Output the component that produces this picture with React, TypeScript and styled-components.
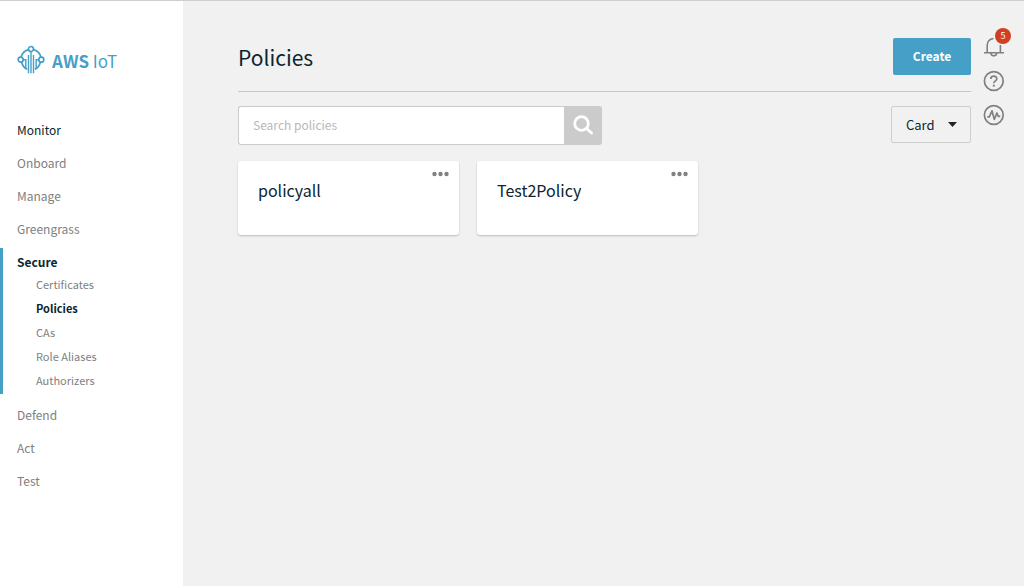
import React from "react";
import styled, { createGlobalStyle, css } from "styled-components";

const blue = "#469fc6";
const ink = "#0c2630";
const grey = "#808080";

const GlobalStyle = createGlobalStyle`
  *, *::before, *::after { box-sizing: border-box; }
  body {
    margin: 0;
    background: #f1f1f1;
    color: ${ink};
    font-family: "Noto Sans CJK SC", "Noto Sans", sans-serif;
    font-size: 13px;
  }
  button, input, select { font: inherit; color: inherit; }
  ul { list-style: none; margin: 0; padding: 0; }
  a { color: inherit; text-decoration: none; }
`;

const Page = styled.div`
  display: flex;
  min-height: 100vh;
  border-top: 1px solid #cfcfcf;
`;

const Sidebar = styled.aside`
  flex: 0 0 183px;
  background: #fff;
`;

const Brand = styled.a`
  display: flex;
  align-items: flex-start;
  gap: 7px;
  padding: 44px 0 0 17px;
  color: ${blue};
  font-size: 17px;
  line-height: 32px;
`;

const NavList = styled.ul`
  display: flex;
  flex-direction: column;
  gap: 5px;
  padding-top: 39px;
`;

const NavItem = styled.li<{ $open?: boolean }>`
  padding: 3px 0 3px 17px;
  ${(p) =>
    p.$open &&
    css`
      padding: 3px 0 2px 14px;
      margin-bottom: 2px;
      border-left: 3px solid ${blue};
    `}
`;

const NavLink = styled.a<{ $dark?: boolean; $bold?: boolean }>`
  display: block;
  line-height: 22px;
  font-size: 12px;
  color: ${(p) => (p.$dark ? ink : grey)};
  font-weight: ${(p) => (p.$bold ? 700 : 400)};
`;

const SubList = styled.ul`
  margin-top: -1px;
`;

const SubLink = styled(NavLink)`
  padding-left: 19px;
  font-size: 11px;
  line-height: 24px;
`;

const Main = styled.main`
  flex: 1;
  min-width: 0;
  padding: 37px 12px 0 55px;
`;

const Header = styled.header`
  display: flex;
  justify-content: space-between;
  align-items: flex-start;
  height: 54px;
  border-bottom: 1px solid #c8c8c8;
`;

const Title = styled.h1`
  margin: 0;
  font-size: 21px;
  font-weight: 400;
  line-height: 38px;
`;

const CreateButton = styled.button`
  width: 78px;
  height: 37px;
  padding: 0 0 2px;
  border: 0;
  border-radius: 2px;
  background: ${blue};
  color: #fff;
  font-weight: 700;
  font-size: 12px;
`;

const Toolbar = styled.div`
  display: flex;
  justify-content: space-between;
  align-items: flex-start;
  padding: 14px 0 16px;
`;

const SearchForm = styled.form`
  display: flex;
  width: 364px;
  height: 39px;
`;

const SearchInput = styled.input`
  flex: 1;
  min-width: 0;
  padding: 0 14px 2px;
  border: 1px solid #cbcbcb;
  border-right: 0;
  border-radius: 3px 0 0 3px;
  background: #fff;
  font-size: 12px;
  &::placeholder { color: #b8b8b8; opacity: 1; }
`;

const SearchButton = styled.button`
  display: grid;
  place-items: center;
  width: 38px;
  padding: 0 0 2px;
  border: 0;
  border-radius: 0 3px 3px 0;
  background: #cbcbcb;
`;

const SelectWrap = styled.div`
  display: grid;
  align-items: center;
  width: 80px;
  height: 37px;
  > * { grid-area: 1 / 1; }
  > svg { justify-self: end; margin-right: 14px; pointer-events: none; }
`;

const ViewSelect = styled.select`
  appearance: none;
  width: 100%;
  height: 100%;
  padding: 0 14px;
  border: 1px solid #cecece;
  border-radius: 2px;
  background: transparent;
`;

const Cards = styled.ul`
  display: flex;
  flex-wrap: wrap;
  gap: 18px;
`;

const Card = styled.li`
  display: flex;
  justify-content: space-between;
  align-items: flex-start;
  width: 221px;
  height: 74px;
  padding: 7px 10px 0 20px;
  border-radius: 3px;
  background: #fff;
  box-shadow: 0 1px 2px rgba(0, 0, 0, 0.22);
`;

const CardTitle = styled.a`
  padding-top: 10px;
  font-size: 16px;
  line-height: 24px;
`;

const MoreButton = styled.button`
  display: block;
  height: 12px;
  padding: 0;
  border: 0;
  background: none;
  svg { display: block; }
`;

const Rail = styled.aside`
  display: flex;
  flex-direction: column;
  flex: 0 0 41px;
  gap: 12px;
  padding-top: 35px;
`;

const RailButton = styled.button`
  position: relative;
  width: 22px;
  height: 22px;
  padding: 0;
  border: 0;
  background: none;
  svg { display: block; }
`;

const Badge = styled.span`
  position: absolute;
  top: -8px;
  right: -6px;
  width: 16px;
  height: 16px;
  border-radius: 50%;
  background: #d13f22;
  color: #fff;
  font-size: 9px;
  line-height: 16px;
  text-align: center;
`;

const Logo = () => (
  <svg width="28" height="30" viewBox="0 0 28 30" fill="none" stroke={blue} strokeWidth="1.7" aria-hidden="true">
    <circle cx="14" cy="4" r="2.500" />
    <circle cx="3.700" cy="14.700" r="2.500" />
    <circle cx="24.300" cy="14.700" r="2.500" />
    <path d="M11.400 4.600C7.500 5.700 4.900 8.400 4.100 12.200M16.600 4.600C20.500 5.700 23.100 8.400 23.900 12.200" />
    <path d="M4.600 17.200C5.500 20.700 7.200 23 10.200 24.300M23.400 17.200C22.500 20.700 20.800 23 17.800 24.300" />
    <path d="M14 6.600V28.300M11.500 10V28.300M16.500 10V28.300M6.200 14.700H8.800V23.500M21.800 14.700H19.200V23.500" strokeWidth="1.400" />
  </svg>
);

const BellIcon = () => (
  <svg width="22" height="22" viewBox="0 0 22 22" fill="none" stroke={grey} strokeWidth="1.600" aria-hidden="true">
    <path d="M1 16.800H21M4.200 16.500V9.500C4.200 5.500 6.500 3 10.500 2.500M17.400 16.500V9" />
    <path d="M7.800 17C8.200 20.800 13.400 20.800 13.800 17" />
  </svg>
);

const HelpIcon = () => (
  <svg width="22" height="22" viewBox="0 0 22 22" fill="none" stroke={grey} strokeWidth="1.700" aria-hidden="true">
    <circle cx="10.800" cy="11" r="9.400" />
    <path d="M7.800 8.900C7.800 5.200 13.800 5.300 13.800 8.700C13.800 10.900 10.800 10.800 10.800 13.200" />
    <path d="M10.800 14.700V16.600" strokeWidth="2" />
  </svg>
);

const PulseIcon = () => (
  <svg width="22" height="22" viewBox="0 0 22 22" fill="none" stroke={grey} strokeWidth="1.700" aria-hidden="true">
    <circle cx="10.800" cy="11" r="9.400" />
    <path d="M4.300 12.800H6.300L9 6.800L11.300 15.400L13.900 9L15.300 12.300H17.300" strokeLinejoin="round" />
  </svg>
);

const SearchIcon = () => (
  <svg width="22" height="22" viewBox="0 0 22 22" fill="none" stroke="#fff" aria-hidden="true">
    <circle cx="9.500" cy="9.500" r="6.800" strokeWidth="2.800" />
    <path d="M14.500 14.500L19.500 19" strokeWidth="3" strokeLinecap="round" />
  </svg>
);

const nav: { label: string; dark?: boolean; children?: string[] }[] = [
  { label: "Monitor", dark: true },
  { label: "Onboard" },
  { label: "Manage" },
  { label: "Greengrass" },
  { label: "Secure", dark: true, children: ["Certificates", "Policies", "CAs", "Role Aliases", "Authorizers"] },
  { label: "Defend" },
  { label: "Act" },
  { label: "Test" },
];

export default function App() {
  return (
    <>
      <GlobalStyle />
      <Page>
        <Sidebar>
          <Brand href="#home">
            <Logo />
            <span><b>AWS</b> IoT</span>
          </Brand>
          <nav>
            <NavList>
              {nav.map((item) => (
                <NavItem key={item.label} $open={!!item.children}>
                  <NavLink href={"#" + item.label} $dark={item.dark} $bold={!!item.children}>{item.label}</NavLink>
                  {item.children && (
                    <SubList>
                      {item.children.map((c) => (
                        <li key={c}>
                          <SubLink href={"#" + c} $dark={c === "Policies"} $bold={c === "Policies"}>{c}</SubLink>
                        </li>
                      ))}
                    </SubList>
                  )}
                </NavItem>
              ))}
            </NavList>
          </nav>
        </Sidebar>
        <Main>
          <Header>
            <Title>Policies</Title>
            <CreateButton type="button">Create</CreateButton>
          </Header>
          <Toolbar>
            <SearchForm role="search" onSubmit={(e) => e.preventDefault()}>
              <SearchInput type="text" placeholder="Search policies" aria-label="Search policies" />
              <SearchButton type="submit" aria-label="Search"><SearchIcon /></SearchButton>
            </SearchForm>
            <SelectWrap>
              <ViewSelect aria-label="View" defaultValue="Card">
                <option>Card</option>
                <option>List</option>
              </ViewSelect>
              <svg width="9" height="5" viewBox="0 0 9 5" aria-hidden="true"><path d="M0 0H9L4.500 5Z" fill="#222" /></svg>
            </SelectWrap>
          </Toolbar>
          <Cards>
            {["policyall", "Test2Policy"].map((name) => (
              <Card key={name}>
                <CardTitle href={"#" + name}>{name}</CardTitle>
                <MoreButton type="button" aria-label={"Actions for " + name}>
                  <svg width="17" height="12" viewBox="0 0 17 12" fill={grey} aria-hidden="true">
                    <circle cx="2.500" cy="6" r="2.200" />
                    <circle cx="8.500" cy="6" r="2.200" />
                    <circle cx="14.500" cy="6" r="2.200" />
                  </svg>
                </MoreButton>
              </Card>
            ))}
          </Cards>
        </Main>
        <Rail>
          <RailButton type="button" aria-label="Notifications"><BellIcon /><Badge>5</Badge></RailButton>
          <RailButton type="button" aria-label="Help"><HelpIcon /></RailButton>
          <RailButton type="button" aria-label="Activity"><PulseIcon /></RailButton>
        </Rail>
      </Page>
    </>
  );
}
